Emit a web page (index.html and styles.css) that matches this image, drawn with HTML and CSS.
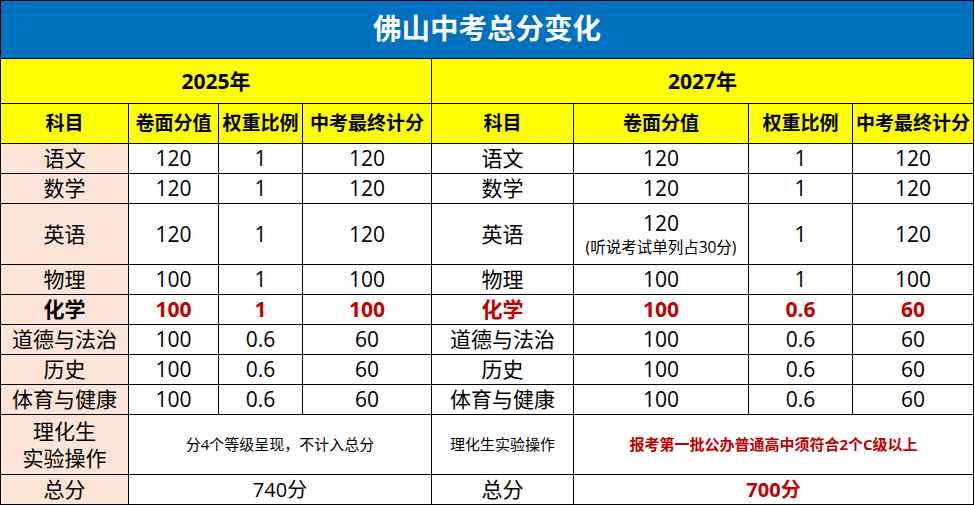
FILE: index.html
```html
<!DOCTYPE html>
<html lang="zh-CN">
<head>
<meta charset="utf-8">
<title>佛山中考总分变化</title>
<link rel="stylesheet" href="styles.css">
</head>
<body>
<div class="sheet">
  <div class="c title span8">佛山中考总分变化</div>

  <div class="c year span4">2025年</div>
  <div class="c year span4">2027年</div>

  <div class="c head">科目</div>
  <div class="c head">卷面分值</div>
  <div class="c head">权重比例</div>
  <div class="c head">中考最终计分</div>
  <div class="c head">科目</div>
  <div class="c head">卷面分值</div>
  <div class="c head">权重比例</div>
  <div class="c head">中考最终计分</div>

  <div class="c subj">语文</div><div class="c">120</div><div class="c">1</div><div class="c">120</div>
  <div class="c">语文</div><div class="c">120</div><div class="c">1</div><div class="c">120</div>

  <div class="c subj">数学</div><div class="c">120</div><div class="c">1</div><div class="c">120</div>
  <div class="c">数学</div><div class="c">120</div><div class="c">1</div><div class="c">120</div>

  <div class="c subj">英语</div><div class="c">120</div><div class="c">1</div><div class="c">120</div>
  <div class="c">英语</div>
  <div class="c stack"><span>120</span><span class="note">(听说考试单列占30分)</span></div>
  <div class="c">1</div><div class="c">120</div>

  <div class="c subj">物理</div><div class="c">100</div><div class="c">1</div><div class="c">100</div>
  <div class="c">物理</div><div class="c">100</div><div class="c">1</div><div class="c">100</div>

  <div class="c subj strong">化学</div><div class="c strong red">100</div><div class="c strong red">1</div><div class="c strong red">100</div>
  <div class="c strong red">化学</div><div class="c strong red">100</div><div class="c strong red">0.6</div><div class="c strong red">60</div>

  <div class="c subj">道德与法治</div><div class="c">100</div><div class="c">0.6</div><div class="c">60</div>
  <div class="c">道德与法治</div><div class="c">100</div><div class="c">0.6</div><div class="c">60</div>

  <div class="c subj">历史</div><div class="c">100</div><div class="c">0.6</div><div class="c">60</div>
  <div class="c">历史</div><div class="c">100</div><div class="c">0.6</div><div class="c">60</div>

  <div class="c subj">体育与健康</div><div class="c">100</div><div class="c">0.6</div><div class="c">60</div>
  <div class="c">体育与健康</div><div class="c">100</div><div class="c">0.6</div><div class="c">60</div>

  <div class="c subj stack"><span>理化生</span><span>实验操作</span></div>
  <div class="c span3 small">分4个等级呈现，不计入总分</div>
  <div class="c small">理化生实验操作</div>
  <div class="c span3 small strong red">报考第一批公办普通高中须符合2个C级以上</div>

  <div class="c subj">总分</div>
  <div class="c span3 total">740分</div>
  <div class="c">总分</div>
  <div class="c span3 total strong red">700分</div>
</div>
</body>
</html>
```

FILE: styles.css
```css
html, body {
  margin: 0;
  padding: 0;
  background: #ffffff;
}

.sheet {
  display: grid;
  grid-template-columns: 127px 89px 83px 128px 141px 174px 103px 120px;
  grid-template-rows: 57px 44px 39px 29px 29px 60px 29px 29px 29px 29px 29px 59px 29px;
  gap: 1px;
  padding: 1px;
  width: max-content;
  background: #000000;
  font-family: "Open Sans", "Noto Sans CJK SC", sans-serif;
  color: #000000;
}

.c {
  background: #ffffff;
  display: flex;
  align-items: center;
  justify-content: center;
  text-align: center;
  font-size: 21px;
  line-height: 1;
  white-space: nowrap;
}

.span8 { grid-column: span 8; }
.span4 { grid-column: span 4; }
.span3 { grid-column: span 3; }

.title {
  background: #0070c0;
  color: #ffffff;
  font-size: 28.5px;
  font-weight: 700;
  padding-bottom: 2px;
}

.year {
  background: #ffff00;
  font-size: 21px;
  font-weight: 700;
}

.head {
  background: #ffff00;
  font-size: 19px;
  font-weight: 700;
}

.subj {
  background: #fce4d6;
}

.strong { font-weight: 700; }
.red { color: #c00000; }

.stack {
  flex-direction: column;
  gap: 6px;
}

.note {
  font-size: 15.5px;
}

.small {
  font-size: 15px;
}

.total {
  font-size: 20px;
}
```
